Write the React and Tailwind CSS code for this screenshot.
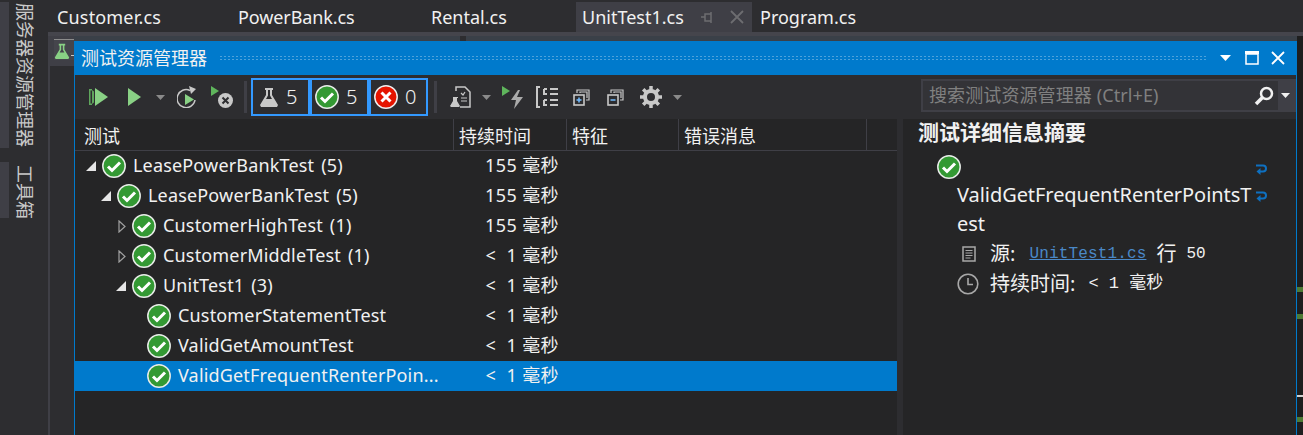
const font = { fontFamily: '"Noto Sans", "Noto Sans CJK SC", sans-serif' };
const mono = { fontFamily: '"Liberation Mono", "Noto Sans CJK SC", monospace' };

function Check({ className = "" }) {
  return (
    <svg width="24" height="24" viewBox="0 0 24 24" className={`shrink-0 ${className}`}>
      <circle cx="12" cy="12" r="11.2" fill="#339933" stroke="#e8ece8" strokeWidth="1.5" />
      <path d="M6 12.5l4 4 8-8" fill="none" stroke="#fff" strokeWidth="3" />
    </svg>
  );
}

function Caret({ className = "" }) {
  return (
    <svg width="9" height="5" viewBox="0 0 9 5" className={`shrink-0 ${className}`}>
      <path d="M0 0h9L4.5 5z" fill="#8a8a8a" />
    </svg>
  );
}

function Flask({ color = "#c8c8c8", size = 20, hole = "#2d2d30" }) {
  return (
    <svg width={size} height={size} viewBox="0 0 20 20" className="shrink-0">
      <path d="M6 1h8v2h-1v5l6 10-1 2H2l-1-2 6-10V3H6z" fill={color} />
      <path d="M9 3v5.500L7 12h6l-2-3.500V3z" fill={hole} />
    </svg>
  );
}

function Sep({ className = "" }) {
  return <div className={`h-[32px] w-[3px] shrink-0 bg-[#3f3f46] ${className}`} />;
}

function Counter({ icon, n, pad }) {
  return (
    <div className={`flex h-[38px] w-[59px] items-center border-2 border-[#3399ff] text-[20px] font-light text-[#f1f1f1] ${pad}`}>
      {icon}
      <span className="ml-[7px]">{n}</span>
    </div>
  );
}

function Toolbar() {
  return (
    <div className="flex h-[44px] items-center bg-[#2d2d30]">
      <svg width="19" height="18" viewBox="0 0 19 18" className="ml-[14px] shrink-0">
        <path d="M6 0l13 9-13 9z" fill="#89d185" />
        <path d="M0 1h3v1.500H1.500v13H3V17H0zM3 2l2 1.500v11L3 16z" fill="#5fa55c" />
      </svg>
      <svg width="13" height="18" viewBox="0 0 13 18" className="ml-[20px] shrink-0">
        <path d="M0 0l13 9-13 9z" fill="#89d185" />
      </svg>
      <Caret className="ml-[15px]" />
      <svg width="21" height="22" viewBox="0 0 21 22" className="ml-[12px] shrink-0">
        <path d="M13 4.500A9 9 0 1 0 18 14" fill="none" stroke="#c8c8c8" strokeWidth="1.500" />
        <path d="M12 0l7 3-5 5z" fill="#c8c8c8" />
        <path d="M8 8l9 5.500L8 19z" fill="#89d185" />
      </svg>
      <svg width="22" height="22" viewBox="0 0 22 22" className="ml-[13px] shrink-0">
        <path d="M0 0l8 5-8 5z" fill="#5fb55c" />
        <circle cx="14.500" cy="14.500" r="7.500" fill="#c8c8c8" />
        <path d="M11.500 11.500l6 6m0-6l-6 6" stroke="#2d2d30" strokeWidth="2" />
      </svg>
      <Sep className="ml-[11px]" />
      <div className="ml-[4px] flex">
        <Counter icon={<Flask />} n="5" pad="pl-[6px]" />
        <Counter icon={<Check />} n="5" pad="pl-[3px]" />
        <Counter
          pad="pl-[3px]"
          icon={
            <svg width="24" height="24" viewBox="0 0 24 24" className="shrink-0">
              <circle cx="12" cy="12" r="11.200" fill="#e51400" stroke="#eee" strokeWidth="1.500" />
              <path d="M7.500 7.500l9 9m0-9l-9 9" stroke="#fff" strokeWidth="3" />
            </svg>
          }
          n="0"
        />
      </div>
      <Sep className="ml-[6px]" />
      <svg width="21" height="22" viewBox="0 0 21 22" className="ml-[13px] shrink-0">
        <path d="M6 5V1h9l5 5v15H10" fill="none" stroke="#c8c8c8" strokeWidth="1.500" />
        <path d="M3 11h5v1H7v3l3 5-1 1H1l-1-1 3-5v-3z" fill="#c8c8c8" />
        <path d="M11 7l2 2 2-3M11 12h6M11 15h6" fill="none" stroke="#c8c8c8" strokeWidth="1.200" />
      </svg>
      <Caret className="ml-[11px]" />
      <svg width="22" height="23" viewBox="0 0 22 23" className="ml-[11px] shrink-0">
        <path d="M0 0l8 5-8 5z" fill="#5fb55c" />
        <path d="M16 4l-7 10h5l-2 9 9-12h-6l3-7z" fill="#aaa" />
      </svg>
      <svg width="22" height="22" viewBox="0 0 22 22" className="ml-[12px] shrink-0">
        <path d="M4 1H1v20h3M8 3h3M8 3v5h3M8 14v5h3M8 14h3M14 3h8M14 8h8M14 14h8M14 19h8" fill="none" stroke="#c8c8c8" strokeWidth="2" />
      </svg>
      <svg width="17" height="17" viewBox="0 0 17 17" className="ml-[15px] shrink-0">
        <path d="M4 4V1h12v10h-3M7 4V3h7v6" fill="none" stroke="#c8c8c8" strokeWidth="1.200" />
        <rect x="1" y="6" width="10" height="10" fill="none" stroke="#c8c8c8" strokeWidth="1.600" />
        <path d="M3.500 11h5M6 8.500v5" stroke="#75beff" strokeWidth="1.500" />
      </svg>
      <svg width="17" height="17" viewBox="0 0 17 17" className="ml-[17px] shrink-0">
        <path d="M4 4V1h12v10h-3M7 4V3h7v6" fill="none" stroke="#c8c8c8" strokeWidth="1.200" />
        <rect x="1" y="6" width="10" height="10" fill="none" stroke="#c8c8c8" strokeWidth="1.600" />
        <path d="M3.500 11h5" stroke="#75beff" strokeWidth="1.500" />
      </svg>
      <svg width="22" height="22" viewBox="0 0 22 22" className="ml-[16px] shrink-0">
        <circle cx="11" cy="11" r="6" fill="none" stroke="#c8c8c8" strokeWidth="4" />
        <path d="M11 0v5M11 17v5M0 11h5M17 11h5M3.200 3.200l3.500 3.500M15.300 15.300l3.500 3.500M18.800 3.200l-3.500 3.500M6.700 15.300l-3.500 3.500" stroke="#c8c8c8" strokeWidth="3.500" />
      </svg>
      <Caret className="ml-[11px]" />
      <div className="mb-[3px] ml-auto flex h-[33px] w-[375px] shrink-0 items-center border-y-2 border-l-2 border-[#3f3f46] bg-[#3f3f46]">
        <div className="flex h-full w-[355px] items-center justify-between bg-[#333337] pl-[6px] pr-[4px] text-[18px] tracking-[0.1px] text-[#808080]">
          <span>搜索测试资源管理器 (Ctrl+E)</span>
          <svg width="20" height="20" viewBox="0 0 20 20">
            <circle cx="12.500" cy="7.500" r="5.500" fill="none" stroke="#f1f1f1" strokeWidth="2.500" />
            <path d="M8.500 11.500L2 18" stroke="#f1f1f1" strokeWidth="3.500" />
          </svg>
        </div>
        <svg width="9" height="5" viewBox="0 0 9 5" className="ml-[3px]">
          <path d="M0 0h9L4.500 5z" fill="#f1f1f1" />
        </svg>
      </div>
    </div>
  );
}

const rows = [
  { indent: 0, arrow: "open", name: "LeasePowerBankTest", count: "(5)", time: "155 毫秒" },
  { indent: 15, arrow: "open", name: "LeasePowerBankTest", count: "(5)", time: "155 毫秒" },
  { indent: 30, arrow: "closed", name: "CustomerHighTest", count: "(1)", time: "155 毫秒" },
  { indent: 30, arrow: "closed", name: "CustomerMiddleTest", count: "(1)", time: "< 1 毫秒" },
  { indent: 30, arrow: "open", name: "UnitTest1", count: "(3)", time: "< 1 毫秒" },
  { indent: 45, name: "CustomerStatementTest", time: "< 1 毫秒" },
  { indent: 45, name: "ValidGetAmountTest", time: "< 1 毫秒" },
  { indent: 45, name: "ValidGetFrequentRenterPoin...", time: "< 1 毫秒", selected: true },
];

function Arrow({ kind }) {
  if (kind === "open") {
    return (
      <svg width="10" height="10" viewBox="0 0 10 10" className="shrink-0">
        <path d="M10 0v10H0z" fill="#e6e6e6" />
      </svg>
    );
  }
  if (kind === "closed") {
    return (
      <svg width="10" height="13" viewBox="0 0 10 13" className="shrink-0">
        <path d="M3 1l6 5.500L3 12z" fill="none" stroke="#a0a0a0" strokeWidth="1.200" />
      </svg>
    );
  }
  return <div className="w-[10px] shrink-0" />;
}

function Row({ row }) {
  return (
    <div className={`relative flex h-[30px] items-center text-[18px] tracking-[0.17px] text-[#f1f1f1] ${row.selected ? "bg-[#007acc]" : ""}`}>
      <div className="flex items-center" style={{ paddingLeft: 11 + row.indent }}>
        <Arrow kind={row.arrow} />
        <Check className="ml-[6px]" />
        <span className="mb-[2px] ml-[7px] whitespace-nowrap">
          {row.name}
          {row.count ? <span className="ml-[7px]">{row.count}</span> : null}
        </span>
      </div>
      <span className="absolute left-[404px] mb-[2px] w-[80px] text-right tracking-[0.4px] whitespace-pre">{row.time.replace("< ", "<  ")}</span>
    </div>
  );
}

function WrapGlyph() {
  return (
    <svg width="12" height="12" viewBox="0 0 12 12" className="shrink-0">
      <path d="M1 1.500h7a2.800 2.800 0 0 1 0 6H3" fill="none" stroke="#0e70c0" strokeWidth="2" />
      <path d="M5.500 4L1.500 7.500l4 3.500z" fill="#0e70c0" />
    </svg>
  );
}

function Details() {
  return (
    <div className="flex-1 bg-[#252526] pl-[15px] text-[#f1f1f1]">
      <div className="h-[30px] text-[21px] leading-[26px] font-bold">测试详细信息摘要</div>
      <div className="ml-[19px] mt-[5px] flex h-[26px] w-[323px] items-center justify-between">
        <Check />
        <span className="mr-[-7px] mt-[5px]"><WrapGlyph /></span>
      </div>
      <div className="relative ml-[39px] w-[297px] break-all text-[20px] leading-[29px] tracking-[-0.06px]">
        ValidGetFrequentRenterPointsTest
        <span className="absolute left-[298px] top-[11px]"><WrapGlyph /></span>
      </div>
      <div className="mt-px flex h-[30px] items-center text-[20px]">
        <svg width="14" height="16" viewBox="0 0 14 16" className="ml-[44px] shrink-0">
          <rect x="1" y="1" width="12" height="14" fill="none" stroke="#a8a8a8" strokeWidth="1.500" />
          <path d="M3.500 4.500h7M3.500 7h7M3.500 9.500h7M3.500 12h5" stroke="#a8a8a8" strokeWidth="1" />
        </svg>
        <span className="ml-[14px]">源:</span>
        <span className="ml-[14px] text-[16px] tracking-[0.15px] text-[#4a88c7] underline" style={mono}>UnitTest1.cs</span>
        <span className="ml-[10px]">行</span>
        <span className="ml-[10px] text-[16px]" style={mono}>50</span>
      </div>
      <div className="flex h-[30px] items-center text-[20px]">
        <svg width="22" height="22" viewBox="0 0 22 22" className="ml-[39px] shrink-0">
          <circle cx="11" cy="11" r="9.800" fill="none" stroke="#a8a8a8" strokeWidth="1.600" />
          <path d="M11 5v6.500h5" fill="none" stroke="#a8a8a8" strokeWidth="1.600" />
        </svg>
        <span className="ml-[11px]">持续时间:</span>
        <span className="ml-[13px] text-[17px]" style={mono}>{"< 1 毫秒"}</span>
      </div>
    </div>
  );
}

function TestWindow() {
  return (
    <div className="flex min-w-0 flex-1 flex-col">
      <div className="h-[5px] shrink-0 bg-[#3a4048]">
        <div className="ml-[386px] h-full w-[6px] bg-[#2d2d30]" />
      </div>
      <div className="flex min-h-0 flex-1 flex-col border-x border-[#007acc] bg-[#252526]">
        <div className="flex h-[34px] items-center bg-[#007acc] pl-[6px] pr-[11px] text-[#f1f1f1]">
          <span className="text-[18px]">测试资源管理器</span>
          <div className="ml-[12px] h-[6px] flex-1 bg-[radial-gradient(#4da2db_1px,transparent_1px)] bg-[length:4px_3px]" />
          <svg width="11" height="6" viewBox="0 0 11 6" className="ml-[12px] shrink-0">
            <path d="M0 0h11L5.500 6z" fill="#fff" />
          </svg>
          <svg width="14" height="14" viewBox="0 0 14 14" className="ml-[14px] shrink-0">
            <path d="M1 3h12v10H1z" fill="none" stroke="#fff" strokeWidth="1.500" />
            <path d="M0 1.500h14" stroke="#fff" strokeWidth="3" />
          </svg>
          <svg width="14" height="14" viewBox="0 0 14 14" className="ml-[12px] shrink-0">
            <path d="M1 1l12 12m0-12L1 13" stroke="#fff" strokeWidth="1.800" />
          </svg>
        </div>
        <Toolbar />
        <div className="flex flex-1">
          <div className="w-[822px] shrink-0">
            <div className="flex h-[32px] border-b border-[#3f3f46] text-[18px] text-[#f1f1f1]">
              <div className="w-[379px] border-r border-[#3f3f46] pl-[9px] leading-[35px]">测试</div>
              <div className="w-[113px] border-r border-[#3f3f46] pl-[5px] leading-[35px]">持续时间</div>
              <div className="w-[112px] border-r border-[#3f3f46] pl-[5px] leading-[35px]">特征</div>
              <div className="w-[188px] border-r border-[#3f3f46] pl-[5px] leading-[35px]">错误消息</div>
            </div>
            {rows.map((r) => (
              <Row key={r.name + r.indent} row={r} />
            ))}
          </div>
          <div className="w-[6px] shrink-0 bg-[#2d2d30]" />
          <Details />
        </div>
      </div>
    </div>
  );
}

function Sidebar() {
  return (
    <div className="flex w-[48px] shrink-0 flex-col bg-[#2d2d30] pt-[2px] text-[18px] leading-[18px] text-[#c8c8c8]">
      <div className="flex h-[146px] items-start">
        <div className="h-full w-[9px] bg-[#3f3f46]" />
        <div className="ml-[7px] pt-px whitespace-nowrap [writing-mode:vertical-rl] [text-orientation:sideways]">服务器资源管理器</div>
      </div>
      <div className="mt-[14px] flex h-[56px] items-start">
        <div className="h-full w-[9px] bg-[#3f3f46]" />
        <div className="ml-[7px] pt-[3px] whitespace-nowrap [writing-mode:vertical-rl] [text-orientation:sideways]">工具箱</div>
      </div>
    </div>
  );
}

function Tab({ children, className = "" }) {
  return <div className={`h-[32px] text-[18px] leading-[35px] text-[#f1f1f1] ${className}`}>{children}</div>;
}

export default function App() {
  return (
    <div className="flex h-[435px] w-[1303px] overflow-hidden bg-[#2d2d30]" style={font}>
      <Sidebar />
      <div className="flex min-w-0 flex-1 flex-col">
        <div className="flex h-[32px] shrink-0 items-end">
          <Tab className="ml-[9px] w-[182px] tracking-[0.17px]">Customer.cs</Tab>
          <Tab className="w-[193px] -translate-x-px tracking-[-0.1px]">PowerBank.cs</Tab>
          <Tab className="w-[144px] -translate-x-px">Rental.cs</Tab>
          <div className="flex h-[30px] w-[176px] items-center bg-[#3f3f46] pl-[6px] text-[18px] text-[#f1f1f1]">
            <span>UnitTest1.cs</span>
            <svg width="14" height="14" viewBox="0 0 14 14" className="ml-[17px] shrink-0">
              <path d="M0 7h4M4 4h6v7H4zM10 2v11" fill="none" stroke="#6d6d70" strokeWidth="1.500" />
            </svg>
            <svg width="14" height="14" viewBox="0 0 14 14" className="ml-[15px] shrink-0">
              <path d="M1 1l12 12m0-12L1 13" stroke="#6d6d70" strokeWidth="1.800" />
            </svg>
          </div>
          <Tab className="ml-[8px]">Program.cs</Tab>
        </div>
        <div className="h-[4px] shrink-0 bg-[#45454c]" />
        <div className="flex min-h-0 flex-1">
          <div className="w-[26px] shrink-0 border-l-[2px] border-[#3f3f46]">
            <div className="h-[30px] bg-[#3f3f46] pl-[4px] pt-[3px]">
              <div className="flex h-[21px] w-[20px] items-start overflow-hidden border-t border-[#8c8c8c] bg-[#45454c] pt-[3px]">
                <Flask color="#89d185" size={16} hole="#45454c" />
                <div className="ml-px mt-[12px] h-px w-[4px] bg-[#c8c8c8]" />
              </div>
            </div>
          </div>
          <TestWindow />
          <div className="flex w-[6px] shrink-0 flex-col bg-[#1e1e1e]">
            <div className="mt-[251px] h-[5px] bg-[#4e7a35]" />
            <div className="mt-[22px] h-[5px] bg-[#4e7a35]" />
            <div className="mt-[76px] h-[2px] bg-[#d0d0d0]" />
            <div className="mt-[20px] h-[5px] bg-[#4e7a35]" />
          </div>
        </div>
      </div>
    </div>
  );
}
